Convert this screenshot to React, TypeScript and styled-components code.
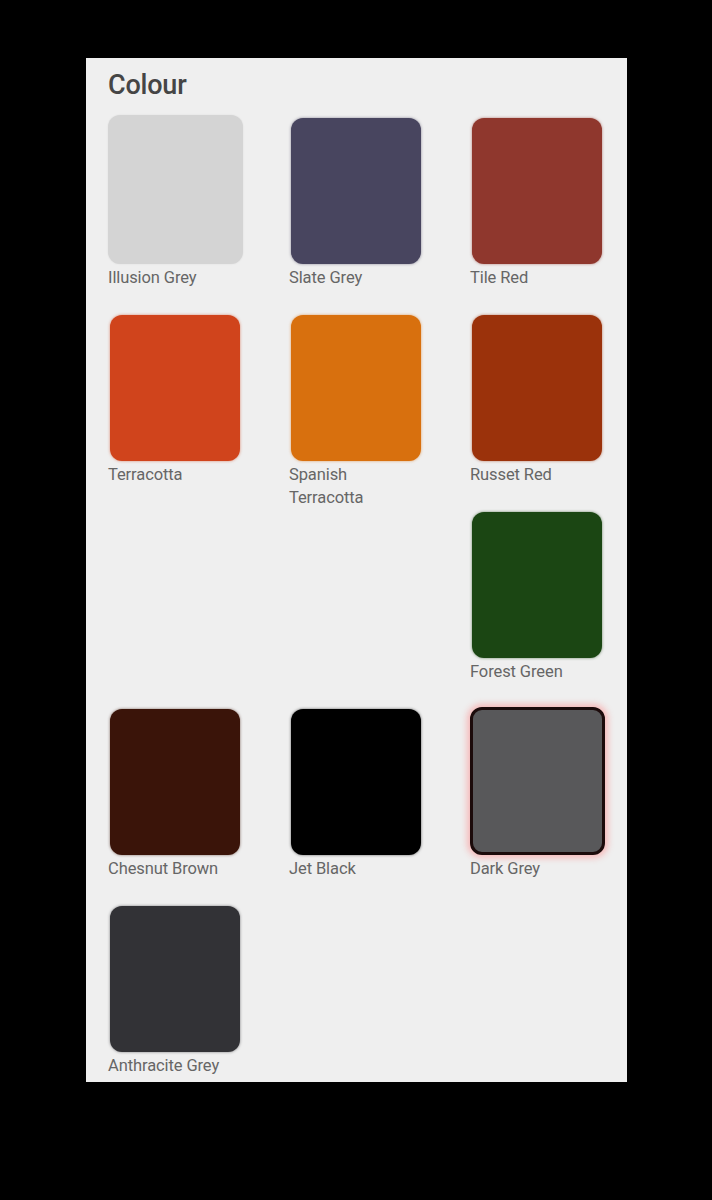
import React from "react";
import styled, { createGlobalStyle, css } from "styled-components";

const Global = createGlobalStyle`
  html, body { margin: 0; padding: 0; background: #000; }
  body { font-family: Roboto, "Noto Sans", Arial, sans-serif; }
`;

const Page = styled.div`
  width: 712px;
  height: 1200px;
  background: #000;
  padding: 58px 0 0 86px;
  box-sizing: border-box;
`;

const Panel = styled.section`
  width: 541px;
  height: 1024px;
  background: #efefef;
  box-sizing: border-box;
  padding: 12px 0 0 22px;
  overflow: hidden;
`;

const Title = styled.h2`
  margin: 0;
  font-family: Roboto, Arial, sans-serif;
  font-weight: 500;
  font-size: 27px;
  line-height: 30px;
  color: #454545;
  letter-spacing: -0.2px;
`;

const Grid = styled.div`
  display: grid;
  grid-template-columns: repeat(3, 134px);
  column-gap: 47px;
  grid-auto-rows: 197px;
  margin-top: 18px;
`;

const Cell = styled.div<{ $col?: number }>`
  display: flex;
  flex-direction: column;
  align-items: flex-start;
  ${(p) => p.$col && css`grid-column: ${p.$col};`}
`;

const Swatch = styled.div<{ $color: string; $selected?: boolean; $hover?: boolean }>`
  width: 130px;
  height: 146px;
  margin-left: 2px;
  border-radius: 12px;
  background: ${(p) => p.$color};
  box-shadow: 0 0 3px ${(p) => p.$color}99;
  box-sizing: border-box;
  ${(p) =>
    p.$hover &&
    css`
      width: 135px;
      height: 149px;
      margin: -3px 0 0 0;
      box-shadow: 0 0 2px rgba(0, 0, 0, 0.08);
    `}
  ${(p) =>
    p.$selected &&
    css`
      width: 135px;
      height: 148px;
      margin: -2px 0 0 0;
      border: 3px solid #1c0b0b;
      box-shadow: 0 0 6px 3px rgba(255, 120, 120, 0.45);
    `}
`;

const Label = styled.span`
  display: block;
  max-width: 130px;
  margin-top: 2px;
  font-family: Roboto, Arial, sans-serif;
  font-size: 16.5px;
  line-height: 23px;
  color: #666;
  letter-spacing: -0.1px;
`;

type Colour = { name: string; color: string; col?: number; selected?: boolean; hover?: boolean };

const colours: Colour[] = [
  { name: "Illusion Grey", color: "#d4d4d4", hover: true },
  { name: "Slate Grey", color: "#48455f" },
  { name: "Tile Red", color: "#8f372d" },
  { name: "Terracotta", color: "#d0441c" },
  { name: "Spanish Terracotta", color: "#d8700e" },
  { name: "Russet Red", color: "#9b320b" },
  { name: "Forest Green", color: "#1b4613", col: 3 },
  { name: "Chesnut Brown", color: "#3a1409" },
  { name: "Jet Black", color: "#000000" },
  { name: "Dark Grey", color: "#58585a", selected: true },
  { name: "Anthracite Grey", color: "#323236" },
];

export default function App() {
  return (
    <>
      <Global />
      <Page>
        <Panel>
          <Title>Colour</Title>
          <Grid>
            {colours.map((c) => (
              <Cell key={c.name} $col={c.col}>
                <Swatch $color={c.color} $selected={c.selected} $hover={c.hover} />
                <Label>{c.name}</Label>
              </Cell>
            ))}
          </Grid>
        </Panel>
      </Page>
    </>
  );
}
